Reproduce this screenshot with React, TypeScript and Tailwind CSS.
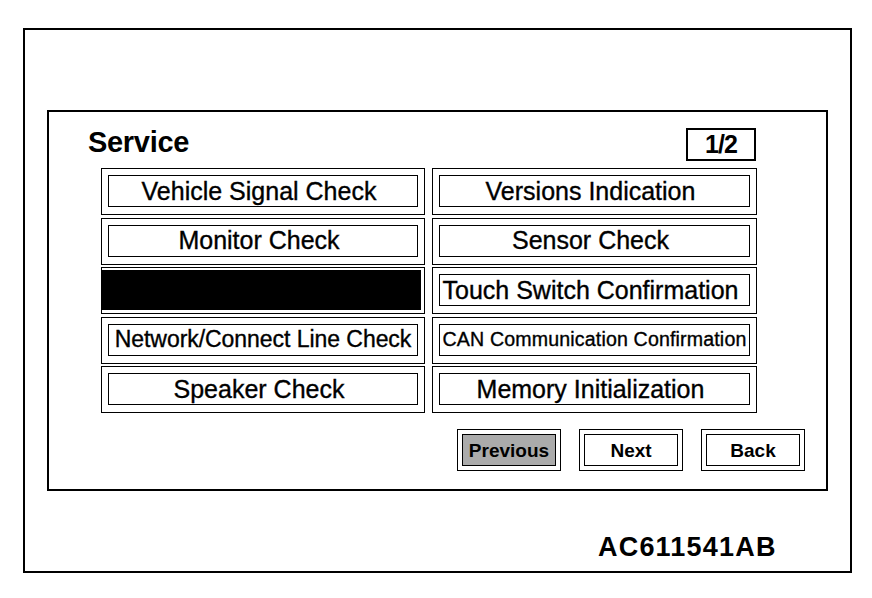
type MenuItem = {
  label: string | null;
  size?: string;
};

const menuItems: MenuItem[] = [
  { label: "Vehicle Signal Check" },
  { label: "Versions Indication" },
  { label: "Monitor Check" },
  { label: "Sensor Check" },
  { label: null },
  { label: "Touch Switch Confirmation" },
  { label: "Network/Connect Line Check", size: "text-[23px] tracking-[-0.05px]" },
  { label: "CAN Communication Confirmation", size: "text-[19.6px] tracking-[0.15px]" },
  { label: "Speaker Check" },
  { label: "Memory Initialization" },
];

function MenuButton({ item }: { item: MenuItem }) {
  // blacked-out entry in the original diagram
  if (!item.label) {
    return (
      <div className="h-[47px] border border-black pt-[2px] pr-[3px] pb-[3px]">
        <div className="h-full w-full bg-black" />
      </div>
    );
  }

  return (
    <div className="h-[47px] border border-black pt-[6px] pb-[7px] px-[6px]">
      <div
        className={`flex h-full items-center justify-center border border-black whitespace-nowrap leading-none [-webkit-text-stroke:0.35px_black] ${
          item.size ?? "text-[25px] pr-[8px]"
        }`}
      >
        {item.label}
      </div>
    </div>
  );
}

function NavButton({ label, active = false }: { label: string; active?: boolean }) {
  return (
    <div className="h-[42px] w-[104px] border border-black p-[4px]">
      <div
        className={`flex h-full items-center justify-center border border-black text-[19px] font-bold leading-none ${
          active ? "bg-[#ababab]" : "bg-white"
        }`}
      >
        {label}
      </div>
    </div>
  );
}

export default function App() {
  return (
    <div className="h-[598px] w-[872px] bg-white pt-[28px] pl-[23px] font-['Liberation_Sans',Arial,sans-serif] text-black">
      <div className="h-[545px] w-[829px] border-2 border-black">
        <div className="ml-[22px] mt-[80px] h-[381px] w-[781px] border-2 border-black">
          <div className="ml-[39px] mt-[16px] flex h-[33px] w-[668px] items-start justify-between">
            <span className="text-[29px] font-bold leading-none tracking-[-0.3px]">Service</span>
            <div className="flex h-[33px] w-[70px] items-center justify-center border-2 border-black text-[25px] font-bold leading-none tracking-[-1px]">
              1/2
            </div>
          </div>

          <div className="ml-[52px] mt-[7px] grid w-[656px] grid-cols-[324px_325px] gap-x-[7px] gap-y-[2.5px]">
            {menuItems.map((item, i) => (
              <MenuButton key={i} item={item} />
            ))}
          </div>

          <div className="mt-[16px] flex justify-end gap-[18px] pr-[21px]">
            <NavButton label="Previous" active />
            <NavButton label="Next" />
            <NavButton label="Back" />
          </div>
        </div>

        <div className="ml-[573px] mt-[43px] text-[27px] font-bold leading-none tracking-[1.2px]">
          AC611541AB
        </div>
      </div>
    </div>
  );
}
